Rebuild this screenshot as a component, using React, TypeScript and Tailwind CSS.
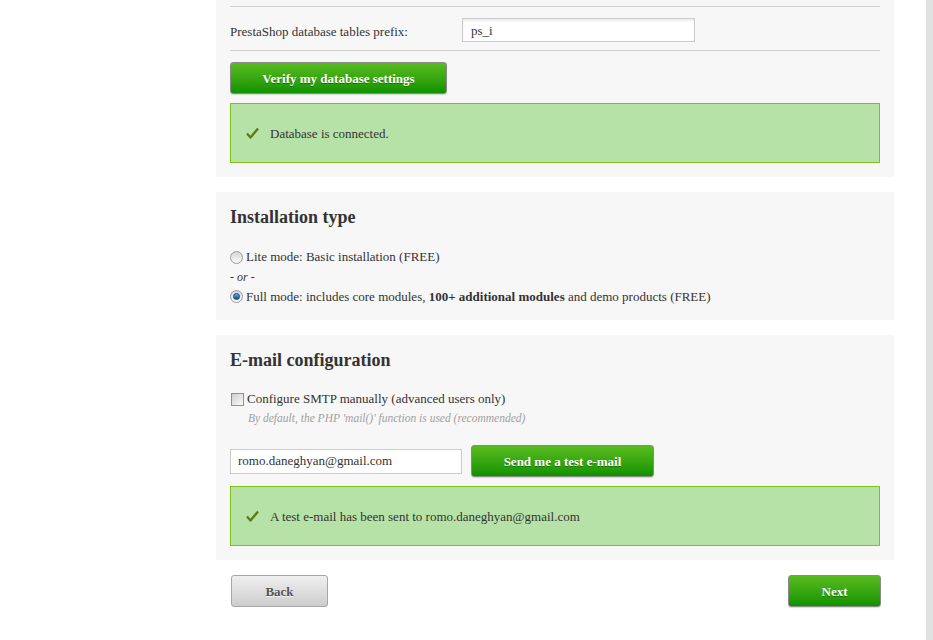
import React from 'react'

const serif = { fontFamily: '"Liberation Serif", "Times New Roman", serif' }

function Check() {
  return (
    <svg width="13" height="12" viewBox="0 0 13 12" className="shrink-0">
      <path d="M1 6.5 L4.5 10.5 L12 1.5" fill="none" stroke="#5b7f0c" strokeWidth="2.4" strokeLinejoin="round" />
    </svg>
  )
}

function Success({ text }: { text: string }) {
  return (
    <div className="h-[60px] border border-[#80c11c] bg-[#b7e2a7] flex items-center pl-[15px] gap-[11px] text-[13px] text-[#333]">
      <Check />
      <span className="pt-[1px]">{text}</span>
    </div>
  )
}

function GreenButton({ label, className }: { label: string; className: string }) {
  return (
    <button
      className={`h-[32px] rounded-[3px] border border-[#8a8a8a] bg-gradient-to-b from-[#57bc1f] to-[#0a9200] text-white font-bold text-[13px] pt-[1px] shadow-[0_1px_1px_rgba(0,0,0,0.15)] [text-shadow:0_1px_0_rgba(0,0,0,0.35)] ${className}`}
      style={serif}
    >
      {label}
    </button>
  )
}

function Radio({ on }: { on?: boolean }) {
  return (
    <span className="w-[13px] h-[13px] rounded-full border border-[#9a9a9a] bg-gradient-to-b from-[#d6d6d6] to-[#fafafa] flex items-center justify-center shrink-0">
      {on && <span className="w-[7px] h-[7px] rounded-full bg-gradient-to-b from-[#5fb4f0] to-[#0a4f8c] border border-[#1e3f66]" />}
    </span>
  )
}

export default function App() {
  return (
    <div className="w-[933px] h-[640px] flex bg-white text-[#333] overflow-hidden" style={serif}>
      <div className="w-[216px] shrink-0" />
      <div className="w-[678px] shrink-0 flex flex-col">
        {/* database */}
        <div className="bg-[#f7f7f7] px-[14px] pt-[6px] pb-[14px]">
          <div className="border-t border-[#cfcfcf] h-[44px] flex items-start">
            <span className="w-[232px] text-[13px] mt-[15px]">PrestaShop database tables prefix:</span>
            <div className="mt-[11px] w-[233px] h-[24px] border border-[#cccccc] bg-white shadow-[inset_0_2px_2px_rgba(0,0,0,0.08)] flex items-center px-[8px] pt-[1px] text-[13px]">ps_i</div>
          </div>
          <div className="border-t border-[#cfcfcf]" />
          <GreenButton label="Verify my database settings" className="mt-[11px] w-[217px]" />
          <div className="mt-[9px]">
            <Success text="Database is connected." />
          </div>
        </div>

        {/* installation type */}
        <div className="mt-[15px] bg-[#f7f7f7] px-[14px] pt-[13px] pb-[12px] h-[128px]">
          <h2 className="text-[18px] font-bold leading-[24px]">Installation type</h2>
          <div className="mt-[19px] flex items-center gap-[3px] text-[13px] h-[18px]">
            <Radio />
            <span>Lite mode: Basic installation (FREE)</span>
          </div>
          <div className="italic text-[12px] h-[20px] leading-[22px]">- or -</div>
          <div className="flex items-center gap-[3px] text-[13px] h-[21px]">
            <Radio on />
            <span>
              Full mode: includes core modules, <b>100+ additional modules</b> and demo products (FREE)
            </span>
          </div>
        </div>

        {/* email */}
        <div className="mt-[15px] bg-[#f7f7f7] px-[14px] pt-[13px] pb-[14px]">
          <h2 className="text-[18px] font-bold leading-[24px]">E-mail configuration</h2>
          <div className="mt-[17px] flex items-center gap-[3px] text-[13px] h-[20px]">
            <span className="w-[13px] h-[13px] border border-[#8f8f8f] bg-gradient-to-br from-[#cfcfcf] to-[#fbfbfb] shrink-0 ml-[1px]" />
            <span>Configure SMTP manually (advanced users only)</span>
          </div>
          <div className="pl-[18px] italic text-[11.5px] text-[#a0a0a0] leading-[18px]">By default, the PHP 'mail()' function is used (recommended)</div>
          <div className="mt-[18px] flex items-center gap-[9px]">
            <div className="w-[232px] h-[25px] border border-[#cccccc] bg-white flex items-center px-[7px] text-[13px]">romo.daneghyan@gmail.com</div>
            <GreenButton label="Send me a test e-mail" className="w-[183px]" />
          </div>
          <div className="mt-[9px]">
            <Success text="A test e-mail has been sent to romo.daneghyan@gmail.com" />
          </div>
        </div>

        <div className="mt-[15px] px-[14px] flex justify-between">
          <button
            className="ml-[1px] w-[97px] h-[32px] rounded-[3px] border border-[#a6a6a6] bg-gradient-to-b from-[#efefef] to-[#cdcdcd] text-[#555] font-bold text-[13px] pt-[1px] [text-shadow:0_1px_0_rgba(255,255,255,0.8)]"
            style={serif}
          >
            Back
          </button>
          <GreenButton label="Next" className="w-[93px] mr-[-1px]" />
        </div>
      </div>
      <div className="flex-1" />
      <div className="w-[7px] h-[640px] bg-[#e0e2e2] shrink-0" />
    </div>
  )
}
